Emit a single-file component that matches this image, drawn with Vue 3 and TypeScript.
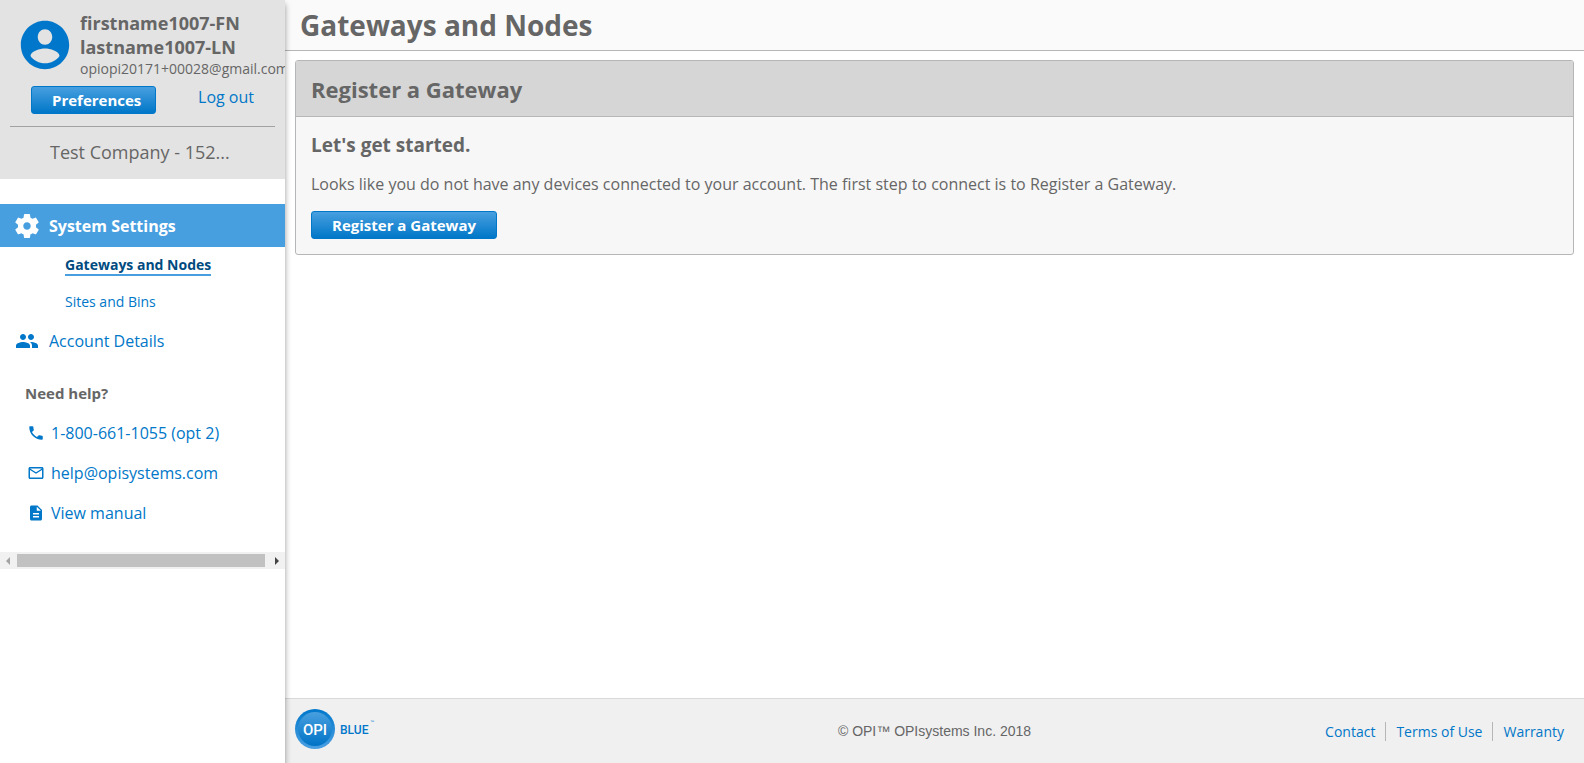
<script setup lang="ts">
interface NavLink {
  label: string
  active: boolean
}

interface HelpLink {
  label: string
  href: string
  icon: string
}

const subLinks: NavLink[] = [
  { label: 'Gateways and Nodes', active: true },
  { label: 'Sites and Bins', active: false },
]

const helpLinks: HelpLink[] = [
  {
    label: '1-800-661-1055 (opt 2)',
    href: 'tel:18006611055',
    icon: 'M6.62 10.79c1.44 2.83 3.76 5.14 6.59 6.59l2.2-2.2c.27-.27.67-.36 1.02-.24 1.12.37 2.33.57 3.57.57.55 0 1 .45 1 1V20c0 .55-.45 1-1 1-9.39 0-17-7.61-17-17 0-.55.45-1 1-1h3.5c.55 0 1 .45 1 1 0 1.25.2 2.45.57 3.57.11.35.03.74-.25 1.02l-2.2 2.2z',
  },
  {
    label: 'help@opisystems.com',
    href: 'mailto:help@opisystems.com',
    icon: 'M20 4H4c-1.1 0-1.99.9-1.99 2L2 18c0 1.1.9 2 2 2h16c1.1 0 2-.9 2-2V6c0-1.1-.9-2-2-2zm0 14H4V8l8 5 8-5v10zm-8-7L4 6h16l-8 5z',
  },
  {
    label: 'View manual',
    href: '#manual',
    icon: 'M14 2H6c-1.1 0-1.99.9-1.99 2L4 20c0 1.1.89 2 1.99 2H18c1.1 0 2-.9 2-2V8l-6-6zm2 16H8v-2h8v2zm0-4H8v-2h8v2zm-3-5V3.500L18.500 9H13z',
  },
]

const footerLinks: string[] = ['Contact', 'Terms of Use', 'Warranty']
</script>

<template>
  <div class="layout">
    <aside class="sidebar">
      <div class="account">
        <div class="profile">
          <svg class="avatar" viewBox="0 0 24 24" aria-hidden="true">
            <path d="M12 2C6.480 2 2 6.480 2 12s4.480 10 10 10 10-4.480 10-10S17.520 2 12 2zm0 3.500c1.660 0 3 1.400 3 3.200s-1.340 3.200-3 3.200-3-1.400-3-3.200 1.340-3.200 3-3.200zm0 14c-2.500 0-4.710-1.100-6-3 .03-1.990 4-3.080 6-3.080s5.970 1.090 6 3.080c-1.290 1.900-3.500 3-6 3z" />
          </svg>
          <div class="identity">
            <div class="name">firstname1007-FN</div>
            <div class="name">lastname1007-LN</div>
            <div class="email">opiopi20171+00028@gmail.com</div>
          </div>
        </div>
        <div class="actions">
          <button class="btn" type="button">Preferences</button>
          <a class="logout" href="#logout">Log out</a>
        </div>
        <div class="company">Test Company - 152...</div>
      </div>

      <nav class="nav">
        <a class="section current" href="#settings">
          <svg class="nav-icon" viewBox="2 2 20 20" aria-hidden="true">
            <path d="M19.430 12.980c.04-.32.07-.64.07-.98s-.03-.66-.07-.98l2.110-1.650c.19-.15.24-.42.12-.64l-2-3.460c-.12-.22-.39-.3-.61-.22l-2.490 1c-.52-.4-1.080-.73-1.690-.98l-.38-2.650C14.460 2.180 14.250 2 14 2h-4c-.25 0-.46.18-.49.42l-.38 2.650c-.61.25-1.170.59-1.690.98l-2.490-1c-.23-.09-.49 0-.61.22l-2 3.460c-.13.22-.07.49.12.64l2.110 1.650c-.04.32-.07.65-.07.98s.03.66.07.98l-2.110 1.650c-.19.15-.24.42-.12.64l2 3.460c.12.22.39.3.61.22l2.490-1c.52.4 1.080.73 1.690.98l.38 2.650c.03.24.24.42.49.42h4c.25 0 .46-.18.49-.42l.38-2.650c.61-.25 1.170-.59 1.690-.98l2.490 1c.23.09.49 0 .61-.22l2-3.460c.12-.22.07-.49-.12-.64l-2.110-1.650zM12 15.100c-1.710 0-3.100-1.390-3.100-3.100s1.390-3.100 3.100-3.100 3.100 1.390 3.100 3.100-1.390 3.100-3.100 3.100z" />
          </svg>
          System Settings
        </a>
        <ul class="sub">
          <li v-for="link in subLinks" :key="link.label">
            <a href="#" :class="{ active: link.active }">{{ link.label }}</a>
          </li>
        </ul>
        <a class="section" href="#account">
          <svg class="nav-icon" viewBox="0 0 24 24" aria-hidden="true">
            <path d="M16 11c1.660 0 2.990-1.340 2.990-3S17.660 5 16 5s-3 1.340-3 3 1.340 3 3 3zm-8 0c1.660 0 2.990-1.340 2.990-3S9.660 5 8 5 5 6.340 5 8s1.340 3 3 3zm0 2c-2.330 0-7 1.170-7 3.500V19h14v-2.500C15 14.170 10.330 13 8 13zm8 0c-.29 0-.62.02-.97.05C16.190 13.890 17 15.020 17 16.500V19h6v-2.500c0-2.330-4.670-3.500-7-3.500z" />
          </svg>
          Account Details
        </a>
      </nav>

      <div class="help">
        <h4>Need help?</h4>
        <a v-for="link in helpLinks" :key="link.label" :href="link.href">
          <svg viewBox="0 0 24 24" aria-hidden="true"><path :d="link.icon" /></svg>
          {{ link.label }}
        </a>
      </div>

      <div class="scrollbar" aria-hidden="true">
        <svg class="arrow dim" viewBox="0 0 17 17"><path d="M10 5v8L6 9z" /></svg>
        <div class="track"><div class="thumb"></div></div>
        <svg class="arrow" viewBox="0 0 17 17"><path d="M7 5v8l4-4z" /></svg>
      </div>
    </aside>

    <div class="page">
      <header class="page-head">
        <h1>Gateways and Nodes</h1>
      </header>
      <main class="content">
        <section class="card">
          <h2>Register a Gateway</h2>
          <div class="card-body">
            <h3>Let's get started.</h3>
            <p>Looks like you do not have any devices connected to your account. The first step to connect is to Register a Gateway.</p>
            <button class="btn" type="button">Register a Gateway</button>
          </div>
        </section>
      </main>
      <footer class="footer">
        <div class="brand">
          <svg class="logo" viewBox="0 0 80 40" role="img" aria-label="OPI Blue">
            <defs>
              <linearGradient id="rim" x1="0" y1="0" x2="0" y2="1">
                <stop offset="0" stop-color="#0077cb" />
                <stop offset="1" stop-color="#4ba0e2" />
              </linearGradient>
              <linearGradient id="disc" x1="0" y1="0" x2="0" y2="1">
                <stop offset="0" stop-color="#489fdf" />
                <stop offset="1" stop-color="#0073c6" />
              </linearGradient>
            </defs>
            <circle cx="20" cy="20" r="20" fill="url(#rim)" />
            <circle cx="20" cy="20" r="17" fill="url(#disc)" />
            <text class="mark" x="20" y="26" text-anchor="middle">OPI</text>
            <text class="word" x="45" y="25">BLUE</text>
            <text class="tm" x="75" y="14">™</text>
          </svg>
        </div>
        <div class="copyright">© OPI™ OPIsystems Inc. 2018</div>
        <nav class="footer-links">
          <a v-for="label in footerLinks" :key="label" href="#">{{ label }}</a>
        </nav>
      </footer>
    </div>
  </div>
</template>

<style>
body {
  margin: 0;
  background: #fff;
}
</style>

<style scoped>
* {
  box-sizing: border-box;
}

.layout {
  display: flex;
  min-height: 100vh;
  font-family: "Open Sans", "Noto Sans", sans-serif;
  font-size: 16px;
  line-height: 24px;
  color: #666;
}

a {
  color: #0077c8;
  text-decoration: none;
}

h1,
h2,
h3,
h4,
p,
ul {
  margin: 0;
  padding: 0;
  font-weight: 700;
}

svg {
  display: block;
  flex: none;
  fill: currentColor;
}

.sidebar {
  position: relative;
  z-index: 1;
  flex: none;
  width: 285px;
  background: #fff;
  box-shadow: 0 4px 6px rgba(0, 0, 0, 0.4);
}

.account {
  height: 179px;
  padding: 11px 10px 0;
  background: #e3e3e3;
  overflow: hidden;
}

.profile {
  display: flex;
  height: 69px;
}

.avatar {
  width: 58px;
  height: 58px;
  margin: 5px 6px 0;
  color: #0077cb;
}

.name {
  font-size: 18px;
  font-weight: 700;
}

.email {
  font-size: 14px;
  line-height: 20px;
  white-space: nowrap;
}

.actions {
  display: flex;
  align-items: flex-start;
  justify-content: space-between;
  height: 47px;
  padding: 6px 21px 0;
  border-bottom: 1px solid #a2a2a2;
}

.btn {
  height: 28px;
  padding: 0 20px;
  border: 1px solid #0077c8;
  border-radius: 3px;
  background: linear-gradient(#489fdf, #0077c8);
  color: #fff;
  font: 700 15px/26px "Open Sans", "Noto Sans", sans-serif;
}

.actions .btn {
  padding: 0 14px 0 20px;
}

.logout {
  line-height: 22px;
}

.company {
  padding: 12px 40px;
  font-size: 18px;
  line-height: 26px;
  white-space: nowrap;
}

.nav {
  padding-top: 25px;
}

.section {
  display: flex;
  align-items: center;
  gap: 10px;
  height: 28px;
  padding: 0 15px;
}

.section.current {
  height: 43px;
  background: #489fdf;
  color: #fff;
  font-weight: 700;
}

.nav-icon {
  width: 24px;
  height: 24px;
}

.sub {
  list-style: none;
  padding: 6px 0 0 65px;
  font-size: 14px;
}

.sub li {
  height: 37px;
  font-weight: 400;
}

.sub a {
  display: inline-block;
  line-height: 19px;
}

.sub .active {
  border-bottom: 2px solid #489fdf;
  color: #004b7f;
  font-weight: 700;
}

.help {
  padding: 26px 25px 19px;
}

.help h4 {
  margin-bottom: 8px;
  font-size: 15px;
}

.help a {
  display: flex;
  align-items: center;
  gap: 6px;
  height: 40px;
}

.help svg {
  width: 18px;
  height: 18px;
  margin-left: 2px;
}

.scrollbar {
  display: flex;
  height: 17px;
  background: #f1f1f1;
  color: #444;
}

.arrow {
  width: 17px;
  height: 17px;
}

.arrow.dim {
  color: #a3a3a3;
}

.track {
  flex: 1;
  padding: 2px 3px 2px 0;
}

.thumb {
  height: 13px;
  background: #c1c1c1;
}

.page {
  display: flex;
  flex: 1;
  flex-direction: column;
  min-width: 0;
}

.page-head {
  height: 51px;
  padding: 5px 15px;
  border-bottom: 1px solid #b5b6b7;
  background: #fafafa;
}

h1 {
  font-size: 28px;
  line-height: 40px;
}

.content {
  flex: 1;
  padding: 9px 10px;
}

.card {
  border: 1px solid #b5b6b7;
  border-radius: 3px;
  background: #f7f7f7;
  overflow: hidden;
}

h2 {
  padding: 13px 15px 12px;
  border-bottom: 1px solid #b5b6b7;
  background: #d6d6d6;
  font-size: 22px;
  line-height: 30px;
}

.card-body {
  padding: 14px 15px 15px;
}

h3 {
  margin-bottom: 13px;
  font-size: 19px;
  line-height: 28px;
}

p {
  margin-bottom: 15px;
  font-weight: 400;
}

.card .btn {
  display: block;
}

.footer {
  display: grid;
  grid-template-columns: 1fr auto 1fr;
  align-items: center;
  height: 65px;
  padding: 0 10px;
  border-top: 1px solid #d9d9d9;
  background: #f0f0f0;
}

.logo {
  width: 80px;
  height: 40px;
  margin-bottom: 4px;
}

.mark,
.word {
  font-family: Roboto, "Liberation Sans", sans-serif;
  font-size: 15px;
  font-weight: 500;
  fill: #fff;
}

.word {
  font-size: 12px;
  fill: #0077cb;
}

.tm {
  font-family: "Liberation Sans", sans-serif;
  font-size: 4px;
  fill: #0077cb;
}

.copyright {
  font-family: "Liberation Sans", Arial, sans-serif;
  font-size: 14px;
}

.footer-links {
  display: flex;
  justify-content: flex-end;
  padding-right: 10px;
  font-size: 14px;
  line-height: 19px;
}

.footer-links a + a {
  margin-left: 10px;
  padding-left: 10px;
  border-left: 1px solid #b5b6b7;
}
</style>
